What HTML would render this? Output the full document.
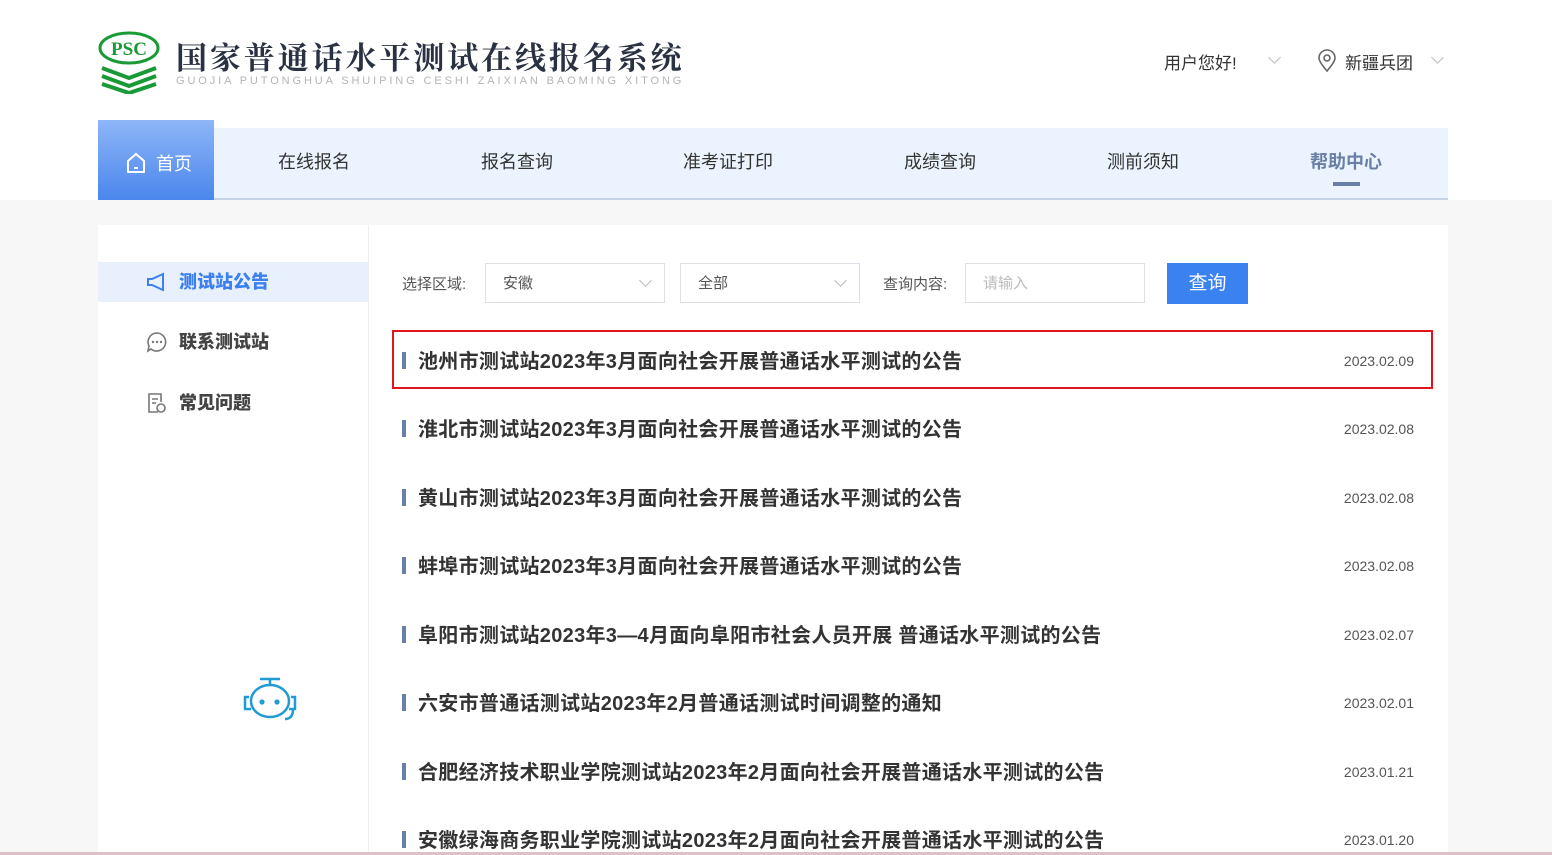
<!DOCTYPE html>
<html><head><meta charset="utf-8"><style>
*{margin:0;padding:0;box-sizing:border-box}
html,body{width:1552px;height:855px;overflow:hidden}
body{background:#f7f7f7;font-family:"Liberation Sans","Noto Sans CJK SC",sans-serif;position:relative;color:#333}
.hdr{position:absolute;left:0;top:0;width:1552px;height:200px;background:#fff}
.abs{position:absolute}
.nav{position:absolute;left:98px;top:128px;width:1350px;height:72px;background:#ebf4fe;border-bottom:2px solid #c5d3e6}
.nav span{position:absolute;top:20px;font-size:18px;color:#333}
.home{position:absolute;left:98px;top:120px;width:116px;height:80px;background:linear-gradient(#8eb6f8,#4a86ec);color:#fff;font-size:18px}
.card{position:absolute;left:98px;top:225px;width:1350px;height:627px;background:#fff;overflow:hidden}
.side{position:absolute;left:0;top:0;width:271px;height:640px;border-right:1px solid #eee}
.si{position:absolute;left:0;width:270px;height:40px;font-size:18px;font-weight:bold;color:#444;line-height:40px}
.si b{position:absolute;left:81px}
.row{position:absolute;left:304px;width:1040px;height:58px}
.row .bar{position:absolute;left:0;top:20px;width:4px;height:17px;background:#6a7fa5}
.row .t{position:absolute;left:16px;top:17px;font-size:20px;font-weight:bold;color:#333;line-height:26px;white-space:nowrap;letter-spacing:0.3px}
.row .d{position:absolute;right:28px;top:21px;font-size:14px;color:#555}
.sel{position:absolute;top:38px;width:180px;height:40px;border:1px solid #dcdfe6;font-size:15px;color:#555;line-height:40px;padding-left:17px}
.sel i{position:absolute;right:14px;top:12px;width:9px;height:9px;border-right:1px solid #bbb;border-bottom:1px solid #bbb;transform:rotate(45deg)}
.lbl{position:absolute;top:48px;font-size:15px;color:#555}
</style></head><body>
<div class="hdr">
 <svg class="abs" style="left:98px;top:30px" width="62" height="64" viewBox="0 0 62 64">
  <ellipse cx="31" cy="18" rx="29" ry="15" fill="none" stroke="#1a9a36" stroke-width="3"/>
  <text x="31" y="25" text-anchor="middle" font-family="Liberation Serif" font-weight="bold" font-size="19" fill="#1a9a36">PSC</text>
  <g stroke="#1a9a36" stroke-width="4" fill="none">
   <path d="M4 38 L31 48 L58 38"/><path d="M4 46 L31 56 L58 46"/><path d="M4 54 L31 63 L58 54"/></g>
 </svg>
 <div class="abs" style="left:176px;top:33px;font-family:'Noto Serif CJK SC',serif;font-weight:bold;font-size:31px;color:#2a3142;letter-spacing:2.9px;white-space:nowrap">国家普通话水平测试在线报名系统</div>
 <div class="abs" style="left:176px;top:75px;font-size:11px;color:#b5b5b5;letter-spacing:2.9px;white-space:nowrap">GUOJIA PUTONGHUA SHUIPING CESHI ZAIXIAN BAOMING XITONG</div>
 <div class="abs" style="left:1164px;top:49px;font-size:17px;color:#333">用户您好!</div>
 <div class="abs" style="left:1270px;top:53px;width:9px;height:9px;border-right:1px solid #bbb;border-bottom:1px solid #bbb;transform:rotate(45deg)"></div>
 <svg class="abs" style="left:1317px;top:49px" width="20" height="24" viewBox="0 0 20 24"><path d="M10 22 C4 15 2 11 2 9 A8 8 0 0 1 18 9 C18 11 16 15 10 22Z" fill="none" stroke="#666" stroke-width="1.6"/><circle cx="10" cy="9" r="3" fill="none" stroke="#666" stroke-width="1.6"/></svg>
 <div class="abs" style="left:1345px;top:49px;font-size:17px;color:#333">新疆兵团</div>
 <div class="abs" style="left:1433px;top:53px;width:9px;height:9px;border-right:1px solid #bbb;border-bottom:1px solid #bbb;transform:rotate(45deg)"></div>
</div>
<div class="nav">
 <span style="left:180px">在线报名</span><span style="left:383px">报名查询</span><span style="left:585px">准考证打印</span><span style="left:806px">成绩查询</span><span style="left:1009px">测前须知</span>
 <span style="left:1212px;color:#6a7fa5;font-weight:bold">帮助中心</span>
 <div class="abs" style="left:1235px;top:54px;width:27px;height:4px;background:#6a7fa5"></div>
</div>
<div class="home"><svg class="abs" style="left:28px;top:32px" width="20" height="22" viewBox="0 0 20 22"><path d="M2 9 L10 2 L18 9 V20 H2Z" fill="none" stroke="#fff" stroke-width="2"/><path d="M8 16 H12" stroke="#fff" stroke-width="2"/></svg><span class="abs" style="left:58px;top:30px">首页</span></div>
<div class="card">
 <div class="side">
  <div class="si" style="top:37px;background:#e8f0fd;color:#3b7ff0"><svg class="abs" style="left:48px;top:10px" width="22" height="20" viewBox="0 0 22 20"><path d="M2 7 H6 L17 2 V18 L6 13 H2Z" fill="none" stroke="#3b7ff0" stroke-width="2"/></svg><b>测试站公告</b></div>
  <div class="si" style="top:97px"><svg class="abs" style="left:48px;top:9px" width="22" height="22" viewBox="0 0 22 22"><path d="M11 2 A9 9 0 1 1 5 18 L2 20 L3 15 A9 9 0 0 1 11 2Z" fill="none" stroke="#777" stroke-width="1.6"/><circle cx="7" cy="11" r="1.2" fill="#777"/><circle cx="11" cy="11" r="1.2" fill="#777"/><circle cx="15" cy="11" r="1.2" fill="#777"/></svg><b>联系测试站</b></div>
  <div class="si" style="top:158px"><svg class="abs" style="left:48px;top:9px" width="22" height="22" viewBox="0 0 22 22"><path d="M12 20 H3 V2 H15 V10" fill="none" stroke="#777" stroke-width="1.6"/><path d="M6 7 H12 M6 11 H10" stroke="#777" stroke-width="1.6"/><circle cx="15" cy="16" r="4" fill="none" stroke="#777" stroke-width="1.6"/></svg><b>常见问题</b></div>
  <svg class="abs" style="left:143px;top:450px" width="58" height="50" viewBox="0 0 58 50"><g fill="none" stroke="#1f9bd6" stroke-width="2.5"><path d="M19 4 H39 M29 4 V9"/><ellipse cx="29" cy="26" rx="19" ry="16"/><path d="M8 22 H4 V34 H10 M50 22 H54 V34 H48 M52 34 Q52 44 44 44"/></g><circle cx="21" cy="27" r="2.6" fill="#1f9bd6"/><circle cx="36" cy="27" r="2.6" fill="#1f9bd6"/></svg>
 </div>
 <div class="lbl" style="left:304px">选择区域:</div>
 <div class="sel" style="left:387px">安徽<i></i></div>
 <div class="sel" style="left:582px">全部<i></i></div>
 <div class="lbl" style="left:785px">查询内容:</div>
 <div class="sel" style="left:867px;color:#bbb">请输入</div>
 <div class="abs" style="left:1069px;top:38px;width:81px;height:41px;background:#3a82ef;color:#fff;font-size:19px;text-align:center;line-height:41px">查询</div>
 <div class="abs" style="left:294px;top:105px;width:1041px;height:59px;border:2px solid #e3141d"></div>
 <div class="row" style="top:107px"><div class="bar"></div><div class="t">池州市测试站2023年3月面向社会开展普通话水平测试的公告</div><div class="d">2023.02.09</div></div>
 <div class="row" style="top:175px"><div class="bar"></div><div class="t">淮北市测试站2023年3月面向社会开展普通话水平测试的公告</div><div class="d">2023.02.08</div></div>
 <div class="row" style="top:244px"><div class="bar"></div><div class="t">黄山市测试站2023年3月面向社会开展普通话水平测试的公告</div><div class="d">2023.02.08</div></div>
 <div class="row" style="top:312px"><div class="bar"></div><div class="t">蚌埠市测试站2023年3月面向社会开展普通话水平测试的公告</div><div class="d">2023.02.08</div></div>
 <div class="row" style="top:381px"><div class="bar"></div><div class="t">阜阳市测试站2023年3—4月面向阜阳市社会人员开展 普通话水平测试的公告</div><div class="d">2023.02.07</div></div>
 <div class="row" style="top:449px"><div class="bar"></div><div class="t">六安市普通话测试站2023年2月普通话测试时间调整的通知</div><div class="d">2023.02.01</div></div>
 <div class="row" style="top:518px"><div class="bar"></div><div class="t">合肥经济技术职业学院测试站2023年2月面向社会开展普通话水平测试的公告</div><div class="d">2023.01.21</div></div>
 <div class="row" style="top:586px"><div class="bar"></div><div class="t">安徽绿海商务职业学院测试站2023年2月面向社会开展普通话水平测试的公告</div><div class="d">2023.01.20</div></div>
</div>
<div class="abs" style="left:0;top:852px;width:1552px;height:3px;background:#d9c3c9"></div>
</body></html>
